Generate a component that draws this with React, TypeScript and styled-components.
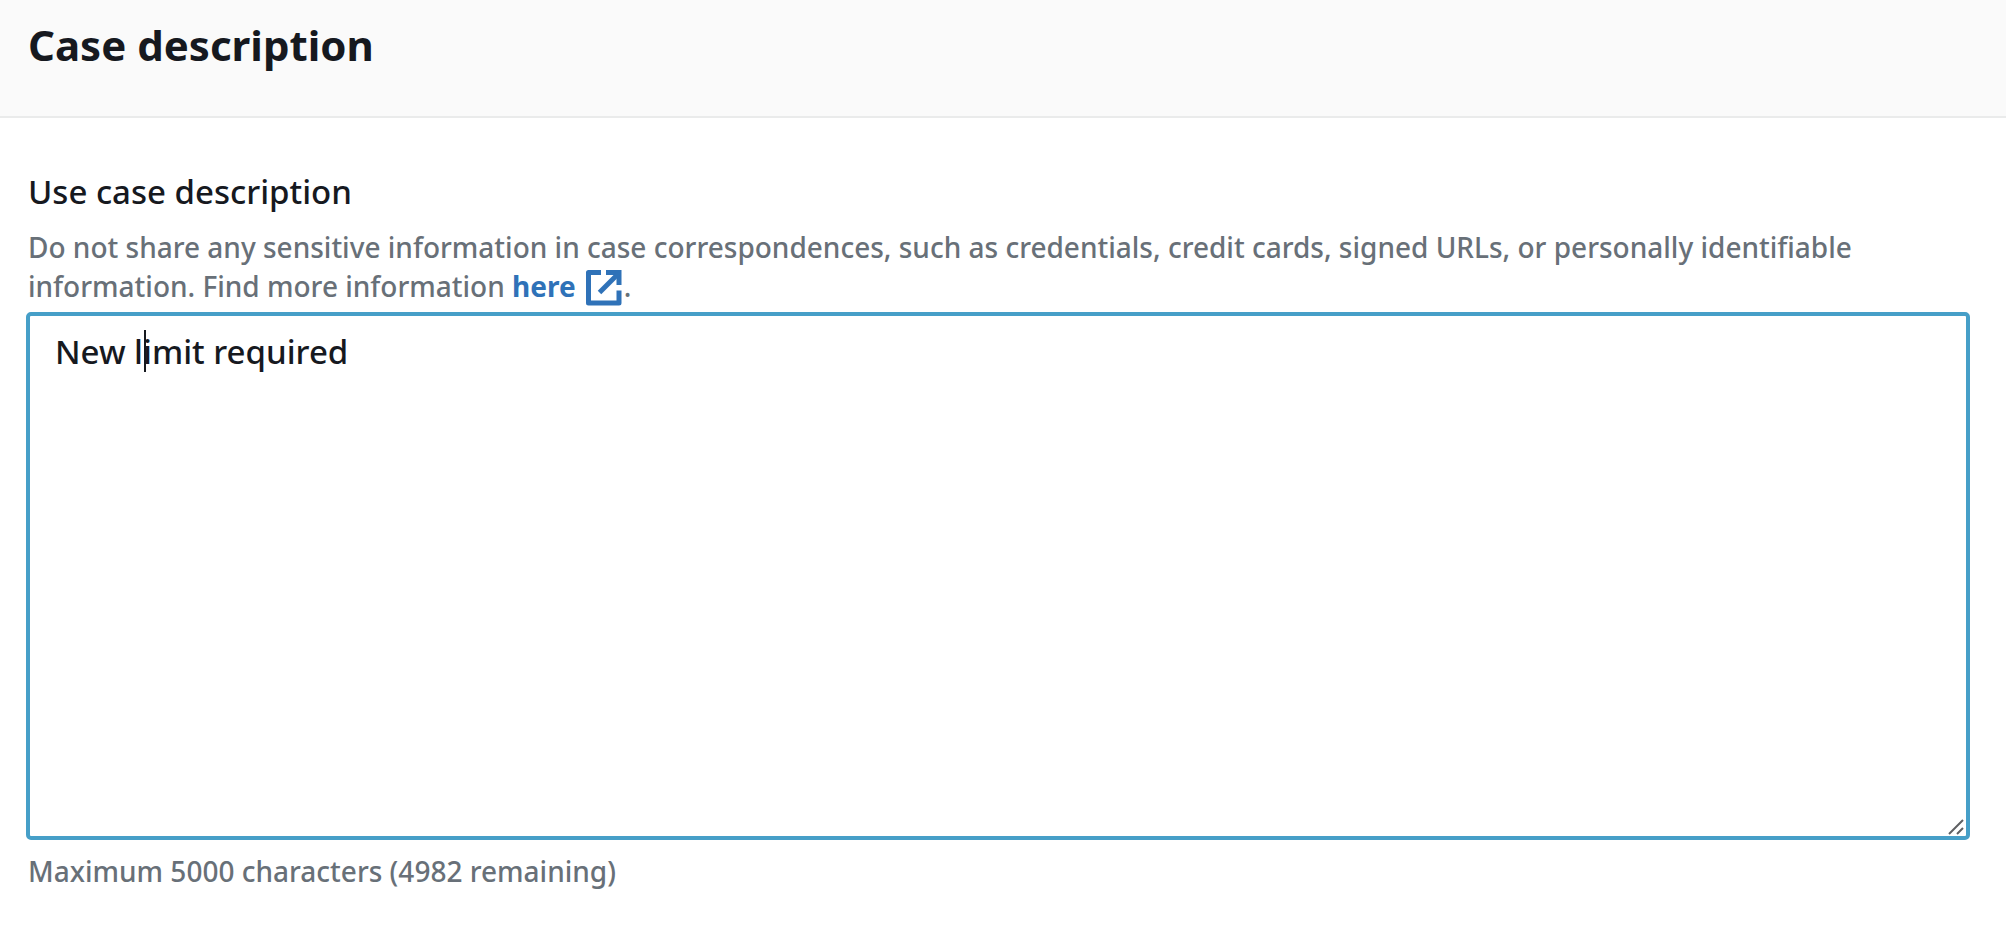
import React, { useState } from "react";
import styled, { createGlobalStyle } from "styled-components";

const MAX_CHARACTERS = 5000;

const GlobalStyle = createGlobalStyle`
  *, *::before, *::after {
    box-sizing: border-box;
  }

  body {
    margin: 0;
    background: #ffffff;
    color: #16191f;
    font-family: "Noto Sans", "Open Sans", sans-serif;
  }
`;

const Header = styled.header`
  padding: 21px 28px 47px;
  background: #fafafa;
  border-bottom: 2px solid #eaebeb;
`;

const Title = styled.h2`
  margin: 0;
  font-size: 42px;
  font-weight: 700;
  line-height: 48px;
`;

const Content = styled.div`
  padding: 52px 36px 36px 26px;
`;

const Label = styled.label`
  display: block;
  padding: 0 2px;
  font-size: 33px;
  font-weight: 500;
  line-height: 44px;
`;

const Hint = styled.p<{ $top: number; $bottom?: number }>`
  margin: ${(p) => p.$top}px 0 ${(p) => p.$bottom ?? 0}px;
  padding: 0 2px;
  color: #687078;
  font-size: 28px;
  font-weight: 500;
  line-height: 39px;
`;

const InfoLink = styled.a`
  color: #2f72b8;
  font-weight: 700;
  text-decoration: none;
  white-space: nowrap;

  &:hover {
    text-decoration: underline;
  }
`;

const LinkIcon = styled.svg`
  width: 36px;
  height: 36px;
  margin: -6px 2px -6px 10px;
  vertical-align: -3px;
`;

const InputArea = styled.div`
  position: relative;
`;

const TextArea = styled.textarea`
  display: block;
  width: 100%;
  margin: 0;
  padding: 14px 25px 22px;
  border: 4px solid #469fc8;
  border-radius: 5px;
  outline: none;
  background: #ffffff;
  color: #16191f;
  caret-color: transparent;
  font-family: inherit;
  font-size: 33px;
  font-weight: 500;
  line-height: 44px;
  resize: vertical;

  &::-webkit-resizer {
    background: transparent;
  }
`;

const Caret = styled.span`
  position: absolute;
  top: 18px;
  left: 118px;
  width: 2px;
  height: 42px;
  background: #16191f;
  pointer-events: none;
`;

const ResizeGrip = styled.svg`
  position: absolute;
  right: 6px;
  bottom: 5px;
  width: 16px;
  height: 16px;
  pointer-events: none;
`;

export default function App() {
  const [value, setValue] = useState("New limit required");
  const remaining = MAX_CHARACTERS - value.length;

  return (
    <>
      <GlobalStyle />
      <main>
        <Header>
          <Title>Case description</Title>
        </Header>
        <Content>
          <Label htmlFor="use-case">Use case description</Label>
          <Hint id="use-case-hint" $top={14} $bottom={6}>
            Do not share any sensitive information in case correspondences, such as credentials,
            credit cards, signed URLs, or personally identifiable information. Find more
            information{" "}
            <InfoLink href="#more-information">
              here
              <LinkIcon viewBox="0 0 36 36" fill="none" stroke="currentColor" strokeWidth="5" aria-hidden="true">
                <path d="M15 2.5H2.5V33H33V20.5" strokeLinejoin="round" />
                <path d="M20 2.5H33V15" strokeLinejoin="miter" />
                <path d="M13.5 22.5L32 4" />
              </LinkIcon>
            </InfoLink>
            .
          </Hint>
          <InputArea>
            <TextArea
              id="use-case"
              rows={11}
              maxLength={MAX_CHARACTERS}
              aria-describedby="use-case-hint use-case-count"
              value={value}
              onChange={(e) => setValue(e.target.value)}
            />
            <Caret />
            <ResizeGrip viewBox="0 0 16 16" fill="none" stroke="#5f6063" strokeWidth="2" aria-hidden="true">
              <path d="M1 15L15 1M9 15L15 9" />
            </ResizeGrip>
          </InputArea>
          <Hint id="use-case-count" $top={12}>
            Maximum {MAX_CHARACTERS} characters ({remaining} remaining)
          </Hint>
        </Content>
      </main>
    </>
  );
}
